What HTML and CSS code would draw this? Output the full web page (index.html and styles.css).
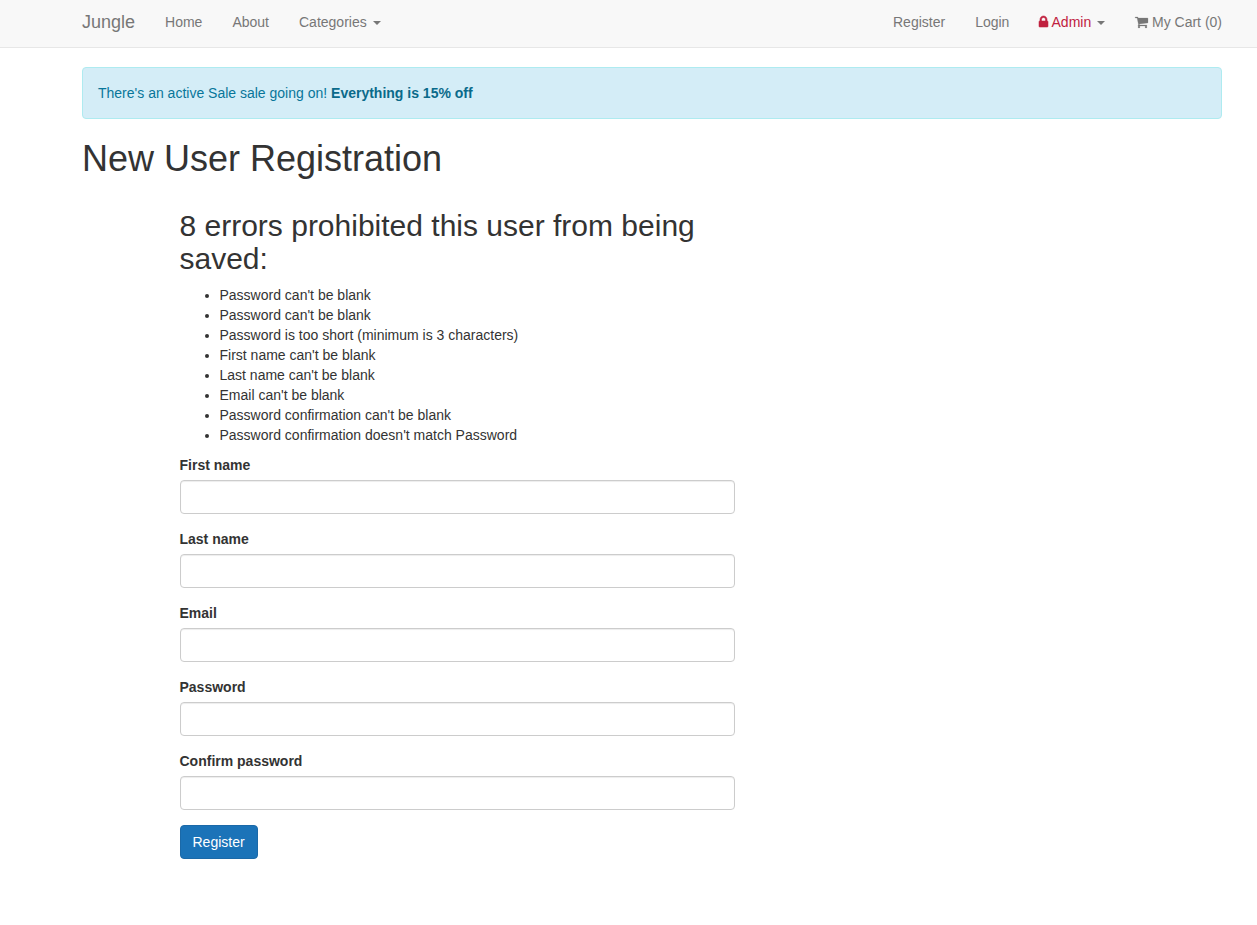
FILE: index.html
```html
<!DOCTYPE html>
<html lang="en">
<head>
<meta charset="utf-8">
<title>Jungle</title>
<link rel="stylesheet" href="styles.css">
</head>
<body>
<nav class="navbar">
  <div class="container navbar-inner">
    <a class="brand">Jungle</a>
    <ul class="nav">
      <li><a>Home</a></li>
      <li><a>About</a></li>
      <li><a>Categories <span class="caret"></span></a></li>
    </ul>
    <ul class="nav nav-right">
      <li><a>Register</a></li>
      <li><a>Login</a></li>
      <li><a><span class="admin"><svg class="icon icon-lock" viewBox="0 0 1152 1792"><path d="M320 768h512v-192q0-106-75-181t-181-75-181 75-75 181v192zm832 96v576q0 40-28 68t-68 28h-960q-40 0-68-28t-28-68v-576q0-40 28-68t68-28h32v-192q0-184 132-316t316-132 316 132 132 316v192h32q40 0 68 28t28 68z"/></svg> Admin</span> <span class="caret"></span></a></li>
      <li><a><svg class="icon icon-cart" viewBox="0 0 1664 1792"><path d="M640 1536q0 52-38 90t-90 38-90-38-38-90 38-90 90-38 90 38 38 90zm896 0q0 52-38 90t-90 38-90-38-38-90 38-90 90-38 90 38 38 90zm128-1088v512q0 24-16.5 42.5t-40.5 21.5l-1044 122q13 60 13 70 0 16-24 64h920q26 0 45 19t19 45-19 45-45 19h-1024q-26 0-45-19t-19-45q0-11 8-31.500t16-36 21.500-40 15.500-29.500l-177-823h-204q-26 0-45-19t-19-45 19-45 45-19h256q16 0 28.500 6.500t19.500 15.500 13 24.500 8 26 5.500 29.500 4.500 26h1201q26 0 45 19t19 45z"/></svg> My Cart (0)</a></li>
    </ul>
  </div>
</nav>
<main class="container">
  <div class="alert">There's an active Sale sale going on! <strong>Everything is 15% off</strong></div>
  <h1>New User Registration</h1>
  <form class="registration">
    <h2>8 errors prohibited this user from being saved:</h2>
    <ul class="errors">
      <li>Password can't be blank</li>
      <li>Password can't be blank</li>
      <li>Password is too short (minimum is 3 characters)</li>
      <li>First name can't be blank</li>
      <li>Last name can't be blank</li>
      <li>Email can't be blank</li>
      <li>Password confirmation can't be blank</li>
      <li>Password confirmation doesn't match Password</li>
    </ul>
    <div class="form-group"><label for="first">First name</label><input id="first" type="text"></div>
    <div class="form-group"><label for="last">Last name</label><input id="last" type="text"></div>
    <div class="form-group"><label for="email">Email</label><input id="email" type="text"></div>
    <div class="form-group"><label for="password">Password</label><input id="password" type="password"></div>
    <div class="form-group"><label for="confirm">Confirm password</label><input id="confirm" type="password"></div>
    <button class="btn" type="button">Register</button>
  </form>
</main>
</body>
</html>
```
FILE: styles.css
```css
* { box-sizing: border-box; }

body {
  margin: 0;
  background: #fff;
  color: #333;
  font: 14px/20px "Liberation Sans", Arial, sans-serif;
}

.container {
  width: 1140px;
  margin-left: 82px;
}

.navbar {
  height: 48px;
  margin-bottom: 19px;
  padding-top: 12px;
  background: #f8f8f8;
  border-bottom: 1px solid #e7e7e7;
  color: #777;
}

.navbar-inner {
  display: flex;
}

.brand {
  margin-right: 30px;
  font-size: 18px;
}

.nav {
  display: flex;
  gap: 30px;
  margin: 0;
  padding: 0;
  list-style: none;
}

.nav-right { margin-left: auto; }

.admin { color: #c0213f; }

.icon {
  display: inline-block;
  height: 14px;
  overflow: visible;
  fill: currentColor;
  vertical-align: -2px;
}

.icon-lock {
  width: 9px;
  stroke: currentColor;
  stroke-width: 70px;
}

.icon-cart {
  width: 13px;
  stroke: currentColor;
  stroke-width: 30px;
}

.caret {
  display: inline-block;
  margin-left: 2px;
  border-top: 4px solid;
  border-right: 4px solid transparent;
  border-left: 4px solid transparent;
  vertical-align: middle;
}

.alert {
  height: 52px;
  margin-bottom: 20px;
  padding: 15px;
  background: #d4edf7;
  border: 1px solid #aeebf0;
  border-radius: 4px;
  color: #08769a;
}

.alert strong { color: #0a6a8a; }

h1, h2 {
  margin: 20px 0 10px;
  font-weight: 500;
  line-height: 1.1;
}

h1 { font-size: 36px; }
h2 { font-size: 30px; }

.registration {
  display: flow-root;
  width: 555px;
  margin-left: 97.5px;
}

.errors {
  margin: 0 0 10px;
  padding-left: 40px;
}

.form-group { margin-bottom: 15px; }

label {
  display: block;
  margin-bottom: 5px;
  font-weight: bold;
}

input {
  display: block;
  width: 100%;
  height: 34px;
  padding: 6px 12px;
  border: 1px solid #ccc;
  border-radius: 4px;
  box-shadow: inset 0 1px 1px rgba(0, 0, 0, 0.075);
  font: inherit;
}

.btn {
  display: block;
  height: 34px;
  padding: 6px 12px;
  background: #1b73b8;
  border: 1px solid #1b69a8;
  border-radius: 4px;
  color: #fff;
  font: inherit;
}
```
